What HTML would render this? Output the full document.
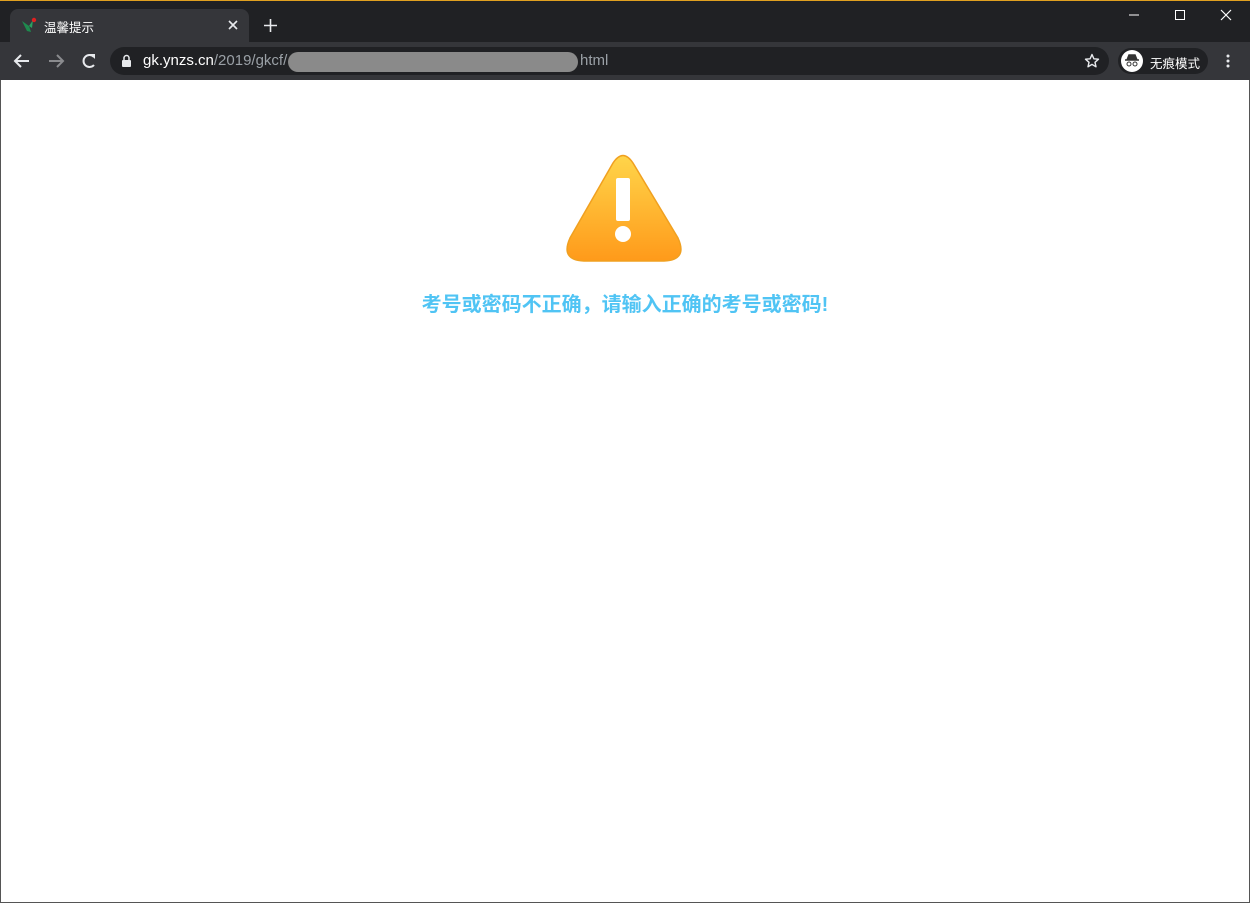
<!DOCTYPE html>
<html><head><meta charset="utf-8"><style>
*{margin:0;padding:0;box-sizing:border-box}
body{width:1250px;height:903px;overflow:hidden;background:#fff;font-family:"Liberation Sans","Noto Sans CJK SC",sans-serif;position:relative}
.top{position:absolute;left:0;top:0;width:1250px;height:42px;background:#202124;border-top:1px solid #e0a020}
.tab{position:absolute;left:10px;top:9px;width:239px;height:34px;background:#35363a;border-radius:8px 8px 0 0}
.bar{position:absolute;left:0;top:42px;width:1250px;height:38px;background:#35363a}
.omni{position:absolute;left:110px;top:47px;width:999px;height:28px;background:#202124;border-radius:14px}
.page{position:absolute;left:0;top:80px;width:1250px;height:823px;border:1px solid #555;border-top:none;background:#fff}
.t{position:absolute;color:#fff;font-size:13px}
</style></head><body>
<div class="top"></div>
<div class="tab"></div>
<svg style="position:absolute;left:20px;top:16px" width="18" height="18" viewBox="0 0 18 18"><path d="M2 5 L9 10 L11 16 L7 15 Z" fill="#1e8a4e"/><path d="M9 10 L13 4 L12 12 Z" fill="#2aa060"/><circle cx="14" cy="4" r="2.2" fill="#e02020"/></svg>
<div class="t" style="left:44px;top:17px;font-size:12.5px">温馨提示</div>
<svg style="position:absolute;left:227px;top:19px" width="12" height="12"><path d="M2 2L10 10M10 2L2 10" stroke="#e8eaed" stroke-width="1.6"/></svg>
<svg style="position:absolute;left:263px;top:18px" width="15" height="15"><path d="M7.5 1V14M1 7.5H14" stroke="#e8eaed" stroke-width="1.6"/></svg>
<svg style="position:absolute;left:1128px;top:8px" width="110" height="14"><path d="M1 7H11" stroke="#fff"/><rect x="47.5" y="2.5" width="9" height="9" fill="none" stroke="#fff"/><path d="M93 2L103 12M103 2L93 12" stroke="#fff" stroke-width="1.2"/></svg>
<div class="bar"></div>
<svg style="position:absolute;left:12px;top:51px" width="90" height="20" viewBox="0 0 90 20"><path d="M17 10H4M9 4L3 10L9 16" stroke="#e8eaed" stroke-width="2" fill="none"/><path d="M37 10H50M45 4L51 10L45 16" stroke="#8a8b8e" stroke-width="2" fill="none"/><path d="M82 6A6 6 0 1 0 82 14" stroke="#e8eaed" stroke-width="2" fill="none"/><path d="M78 3L83 3L83 8Z" fill="#e8eaed"/></svg>
<div class="omni"></div>
<svg style="position:absolute;left:121px;top:54px" width="11" height="13"><path d="M3 6V4A2.5 2.5 0 0 1 8 4V6" stroke="#e8eaed" stroke-width="1.5" fill="none"/><rect x="1" y="6" width="9" height="7" rx="1" fill="#e8eaed"/></svg>
<div class="t" style="left:143px;top:52px;font-size:15px;color:#fff">gk.ynzs.cn<span style="color:#9aa0a6">/2019/gkcf/</span></div>
<div style="position:absolute;left:288px;top:52px;width:290px;height:20px;background:#8a8a8a;border-radius:10px"></div>
<div class="t" style="left:580px;top:52px;font-size:15px;color:#9aa0a6">html</div>
<svg style="position:absolute;left:1084px;top:53px" width="16" height="16" viewBox="0 0 16 16"><path d="M8 1.5L9.9 5.8L14.5 6.2L11 9.3L12 13.8L8 11.4L4 13.8L5 9.3L1.5 6.2L6.1 5.8Z" fill="none" stroke="#e8eaed" stroke-width="1.4" stroke-linejoin="round"/></svg>
<div style="position:absolute;left:1118px;top:48px;width:90px;height:26px;background:#202124;border-radius:13px"></div>
<div style="position:absolute;left:1121px;top:50px;width:22px;height:22px;background:#fff;border-radius:50%"></div>
<svg style="position:absolute;left:1124px;top:54px" width="16" height="14"><path d="M3 6L5 1H11L13 6Z M1 6H15" stroke="#333" stroke-width="1.5" fill="#333"/><circle cx="5" cy="10" r="2" stroke="#333" fill="none"/><circle cx="11" cy="10" r="2" stroke="#333" fill="none"/></svg>
<div class="t" style="left:1150px;top:53px;font-size:12.5px">无痕模式</div>
<svg style="position:absolute;left:1225px;top:53px" width="6" height="16"><circle cx="3" cy="3" r="1.5" fill="#e8eaed"/><circle cx="3" cy="8" r="1.5" fill="#e8eaed"/><circle cx="3" cy="13" r="1.5" fill="#e8eaed"/></svg>
<div class="page"></div>
<svg style="position:absolute;left:560px;top:150px" width="128" height="118" viewBox="0 0 128 118">
<defs><linearGradient id="g" x1="0" y1="0" x2="0" y2="1"><stop offset="0" stop-color="#ffd54a"/><stop offset="1" stop-color="#ff9a1a"/></linearGradient></defs>
<path d="M53 13Q63 -2 73 13L118 88Q128 110 104 111H24Q0 110 10 88Z" fill="url(#g)" stroke="#f0a020" stroke-width="1.5"/>
<rect x="56" y="28" width="14" height="43" rx="2" fill="#fff"/>
<circle cx="63" cy="84" r="8" fill="#fff"/>
</svg>
<div style="position:absolute;left:0;width:1250px;top:288px;text-align:center;font-size:20px;font-weight:bold;color:#50c4f4">考号或密码不正确，请输入正确的考号或密码!</div>
</body></html>
